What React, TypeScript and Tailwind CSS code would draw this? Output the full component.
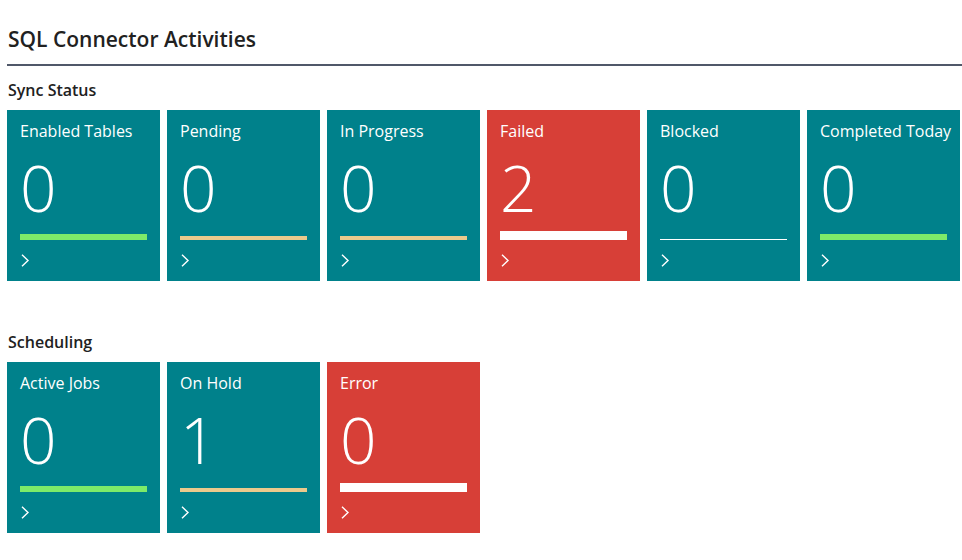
import React from "react";

type Tile = {
  title: string;
  value: number;
  tone: "teal" | "red";
  bar: "green" | "tan" | "white" | "thin";
};

const syncTiles: Tile[] = [
  { title: "Enabled Tables", value: 0, tone: "teal", bar: "green" },
  { title: "Pending", value: 0, tone: "teal", bar: "tan" },
  { title: "In Progress", value: 0, tone: "teal", bar: "tan" },
  { title: "Failed", value: 2, tone: "red", bar: "white" },
  { title: "Blocked", value: 0, tone: "teal", bar: "thin" },
  { title: "Completed Today", value: 0, tone: "teal", bar: "green" },
];

const scheduleTiles: Tile[] = [
  { title: "Active Jobs", value: 0, tone: "teal", bar: "green" },
  { title: "On Hold", value: 1, tone: "teal", bar: "tan" },
  { title: "Error", value: 0, tone: "red", bar: "white" },
];

const barClass: Record<Tile["bar"], string> = {
  green: "h-[6px] bg-[#7deb69]",
  tan: "h-[4px] bg-[#ebca8c]",
  white: "h-[9px] bg-white",
  thin: "h-px bg-white",
};

function Chevron() {
  return (
    <svg width="10" height="13" viewBox="0 0 10 13" fill="none">
      <polyline points="2,0.8 8,6.5 2,12.2" stroke="white" strokeWidth="1.4" />
    </svg>
  );
}

function CueTile({ tile }: { tile: Tile }) {
  return (
    <div
      className={`w-[153px] h-[171px] shrink-0 pt-[9px] px-[13px] text-white flex flex-col ${
        tile.tone === "red" ? "bg-[#d73f37]" : "bg-[#00818b]"
      }`}
    >
      <div className="text-[16px] leading-[24px] whitespace-nowrap">{tile.title}</div>
      <div className="mt-[12px] h-[66px] text-[64px] leading-[66px] font-light">{tile.value}</div>
      <div className="mt-[10px] h-[9px] flex items-end">
        <div className={`w-full ${barClass[tile.bar]}`} />
      </div>
      <div className="mt-[14px] flex">
        <Chevron />
      </div>
    </div>
  );
}

function Section({ label, tiles }: { label: string; tiles: Tile[] }) {
  return (
    <div>
      <div className="pl-px text-[16px] leading-[22px] font-semibold text-[#212121]">{label}</div>
      <div className="mt-[9px] flex gap-[7px]">
        {tiles.map((t) => (
          <CueTile key={t.title} tile={t} />
        ))}
      </div>
    </div>
  );
}

export default function App() {
  return (
    <div
      className="w-[962px] h-[560px] bg-white pl-[7px] overflow-hidden"
      style={{ fontFamily: '"Open Sans", "Noto Sans", sans-serif' }}
    >
      <div className="pt-[24px] pl-px text-[21px] leading-[30px] font-semibold text-[#212121]">
        SQL Connector Activities
      </div>
      <div className="mt-[10px] h-[2px] bg-[#505869]" />
      <div className="mt-[13px]">
        <Section label="Sync Status" tiles={syncTiles} />
      </div>
      <div className="mt-[50px]">
        <Section label="Scheduling" tiles={scheduleTiles} />
      </div>
    </div>
  );
}
